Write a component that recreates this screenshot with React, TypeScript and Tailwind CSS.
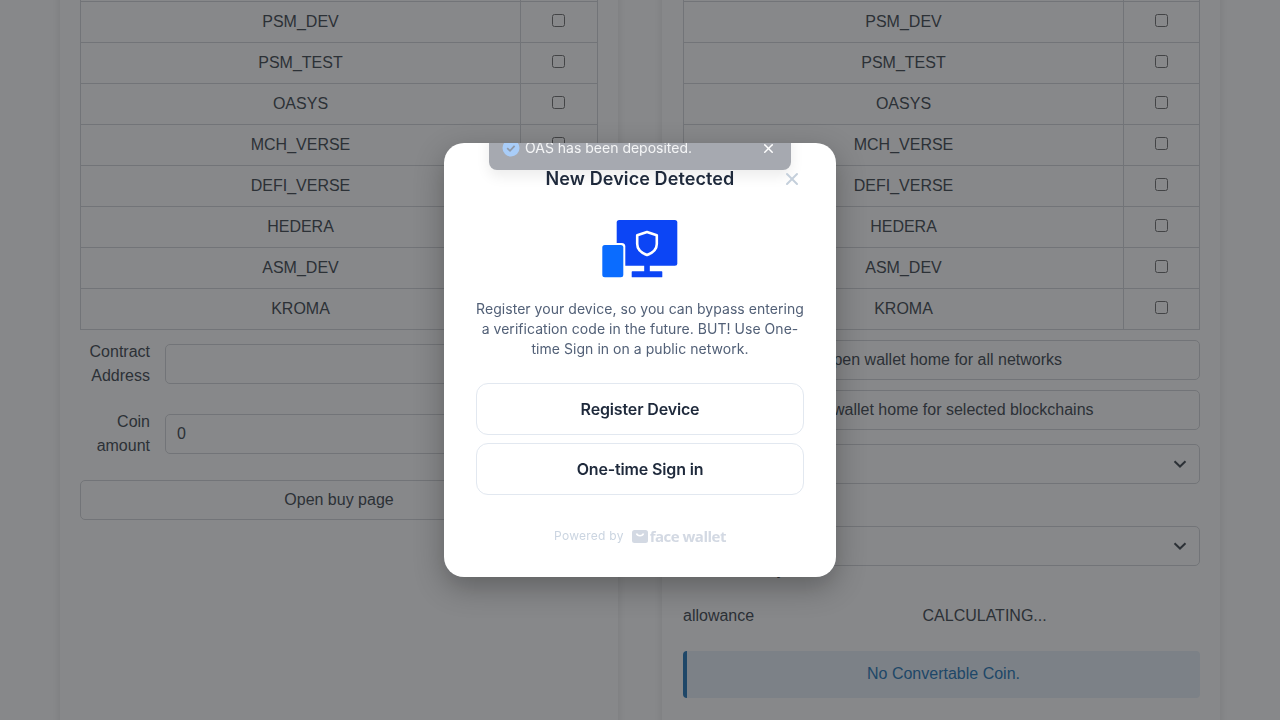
import { X } from 'lucide-react';

const networks = ['PSM_DEV', 'PSM_TEST', 'OASYS', 'MCH_VERSE', 'DEFI_VERSE', 'HEDERA', 'ASM_DEV', 'KROMA'];

function NetworkTable({ boxCellClass = '' }: { boxCellClass?: string }) {
  return (
    <table className="w-full table-fixed border-collapse">
      <colgroup>
        <col className="w-[440px]" />
        <col />
      </colgroup>
      <tbody>
        {/* row scrolled off the top of the page */}
        <tr className="h-[41px]">
          <td className="border border-[#d5d7da]" />
          <td className="border border-[#d5d7da]" />
        </tr>
        {networks.map((name) => (
          <tr key={name} className="h-[41px]">
            <td className="border border-[#d5d7da] text-center">{name}</td>
            <td className={`border border-[#d5d7da] text-center ${boxCellClass}`}>
              <input type="checkbox" className="align-baseline" />
            </td>
          </tr>
        ))}
      </tbody>
    </table>
  );
}

function FormRow({ label, value }: { label: string; value?: string }) {
  return (
    <div className="mb-[22px] flex h-12 items-center gap-[15px]">
      <label className="w-[70px] shrink-0 text-right">{label}</label>
      <input
        readOnly
        value={value ?? ''}
        className="h-10 min-w-0 flex-1 rounded-[5px] border border-[#d5d7da] bg-white px-[11px] text-[#495057]"
      />
    </div>
  );
}

function OutlineButton({ children, className = '' }: { children: React.ReactNode; className?: string }) {
  return (
    <button className={`h-10 w-full rounded-[5px] border border-[#d5d7da] bg-white text-center text-[#495057] ${className}`}>
      {children}
    </button>
  );
}

function SelectBox({ className = '' }: { className?: string }) {
  return (
    <div className={`relative h-10 rounded-[5px] border border-[#d5d7da] bg-white ${className}`}>
      <svg viewBox="0 0 14 8" className="absolute right-[12px] top-[15px] h-2 w-[14px]" fill="none" stroke="#495057" strokeWidth="2">
        <path d="M1.5 1.2 7 6.5l5.5-5.3" />
      </svg>
    </div>
  );
}

function DeviceIllustration() {
  return (
    <svg viewBox="0 0 76 58" className="h-[58px] w-[76px]">
      <rect x="14.7" y="0" width="60.6" height="45.7" rx="2.5" fill="#0c45f5" />
      <rect x="42.2" y="45" width="5.6" height="7" fill="#0c45f5" />
      <rect x="29.7" y="51.3" width="30.6" height="6" rx="0.6" fill="#0c45f5" />
      <rect x="-1.7" y="23" width="25" height="36.3" rx="3.5" fill="#ffffff" />
      <rect x="0.3" y="25" width="21" height="32.3" rx="2.5" fill="#0a6cff" />
      <path
        d="M45 12 54.8 15.2V24C54.8 29.4 50.4 33 45 35 39.6 33 35.2 29.4 35.2 24V15.2Z"
        fill="#0c45f5"
        stroke="#ffffff"
        strokeWidth="2.6"
        strokeLinejoin="round"
      />
    </svg>
  );
}

function FaceWalletLogo() {
  return (
    <div className="flex items-center gap-[2px]">
      <svg viewBox="0 0 16 13" className="h-[13px] w-4">
        <rect width="16" height="13" rx="2.5" fill="#d3d9e3" />
        <path d="M4.5 3.5C5.5 6.5 10.5 6.5 11.5 3.5" fill="none" stroke="#ffffff" strokeWidth="1.6" />
      </svg>
      <span className="font-['Open_Sans',sans-serif] text-[15px] font-bold leading-[18px] tracking-[-0.5px] text-[#d3d9e3]">face wallet</span>
    </div>
  );
}

function DeviceModal() {
  return (
    <div className="relative flex h-[434px] w-[392px] flex-col items-center overflow-hidden rounded-[20px] bg-white px-8 pt-[22px] font-['Inter',sans-serif] shadow-[0_10px_30px_rgba(0,0,0,0.3)]">
      {/* toast sliding in from the top, clipped by the modal */}
      <div className="absolute left-[45px] top-[-17px] flex h-11 w-[302px] items-center rounded-lg bg-[#a6a9b0] pl-[13px] pr-[15px] text-white shadow-[0_6px_14px_rgba(0,0,0,0.08)]">
        <svg viewBox="0 0 18 18" className="h-[18px] w-[18px] shrink-0">
          <circle cx="9" cy="9" r="8.5" fill="#a9cdf8" />
          <path d="M5.2 9.2 8 11.8l4.6-5" fill="none" stroke="#8f99a8" strokeWidth="1.7" />
        </svg>
        <span className="ml-[5px] flex-1 text-sm leading-5 text-[#f4f5f6]">OAS has been deposited.</span>
        <X className="h-[15px] w-[15px] text-white" strokeWidth={2.4} />
      </div>

      <div className="relative flex h-7 w-full items-center justify-center">
        <h2 className="text-lg font-semibold leading-7 tracking-[0.1px] text-[#1e293b]">New Device Detected</h2>
        <X className="absolute right-[2px] top-[4px] h-[20px] w-[20px] text-[#c4cfdb]" strokeWidth={2.4} />
      </div>

      <div className="mt-[27px]">
        <DeviceIllustration />
      </div>

      <p className="mx-[-2px] mt-[21px] text-center text-sm leading-5 tracking-[0.04px] text-[#526077]">
        Register your device, so you can bypass entering a verification code in the future. BUT! Use One-time Sign in on a public network.
      </p>

      <div className="mt-6 flex w-full flex-col gap-2">
        <button className="h-[52px] rounded-xl border border-[#e2e8f0] bg-white text-base font-semibold tracking-[-0.15px] text-[#1e293b]">Register Device</button>
        <button className="h-[52px] rounded-xl border border-[#e2e8f0] bg-white text-base font-semibold tracking-[-0.15px] text-[#1e293b]">One-time Sign in</button>
      </div>

      <div className="mt-8 flex h-[18px] items-center gap-2">
        <span className="text-xs tracking-[0.25px] text-[#cbd5e1]">Powered by</span>
        <FaceWalletLogo />
      </div>
    </div>
  );
}

export default function App() {
  return (
    <div className="relative h-screen overflow-hidden bg-white font-['Liberation_Sans',sans-serif] text-base leading-6 text-[#495057]">
      <div className="flex h-full gap-[44px] px-[60px]">
        <section className="mt-[-40px] h-[800px] w-[558px] shrink-0 bg-white px-5 shadow-[0_0_10px_rgba(0,0,0,0.1)]">
          <NetworkTable boxCellClass="pr-[2px]" />
          <div className="mt-[10px]">
            <FormRow label="Contract Address" />
            <FormRow label="Coin amount" value="0" />
            <OutlineButton>Open buy page</OutlineButton>
          </div>
        </section>

        <section className="mt-[-40px] h-[800px] w-[558px] shrink-0 bg-white pl-[21px] pr-5 shadow-[0_0_10px_rgba(0,0,0,0.1)]">
          <NetworkTable />
          <div className="mt-[10px] flex flex-col gap-[10px]">
            <OutlineButton>Open wallet home for all networks</OutlineButton>
            <OutlineButton>Open wallet home for selected blockchains</OutlineButton>
          </div>
          <SelectBox className="mt-[14px]" />
          <SelectBox className="mt-[42px]" />
          <div className="mt-[-8px]">Your Currency</div>
          <div className="mt-[22px] flex">
            <span className="w-[239.5px]">allowance</span>
            <span>CALCULATING...</span>
          </div>
          <div className="mt-[23px] flex h-[47px] items-center justify-center rounded-[4px] border-l-4 border-[#2f7cba] bg-[#e8f1f8] pb-[2px] text-[#2f7cba]">
            No Convertable Coin.
          </div>
        </section>
      </div>

      <div className="fixed inset-0 flex items-center justify-center bg-[#0f1216]/50">
        <DeviceModal />
      </div>
    </div>
  );
}
